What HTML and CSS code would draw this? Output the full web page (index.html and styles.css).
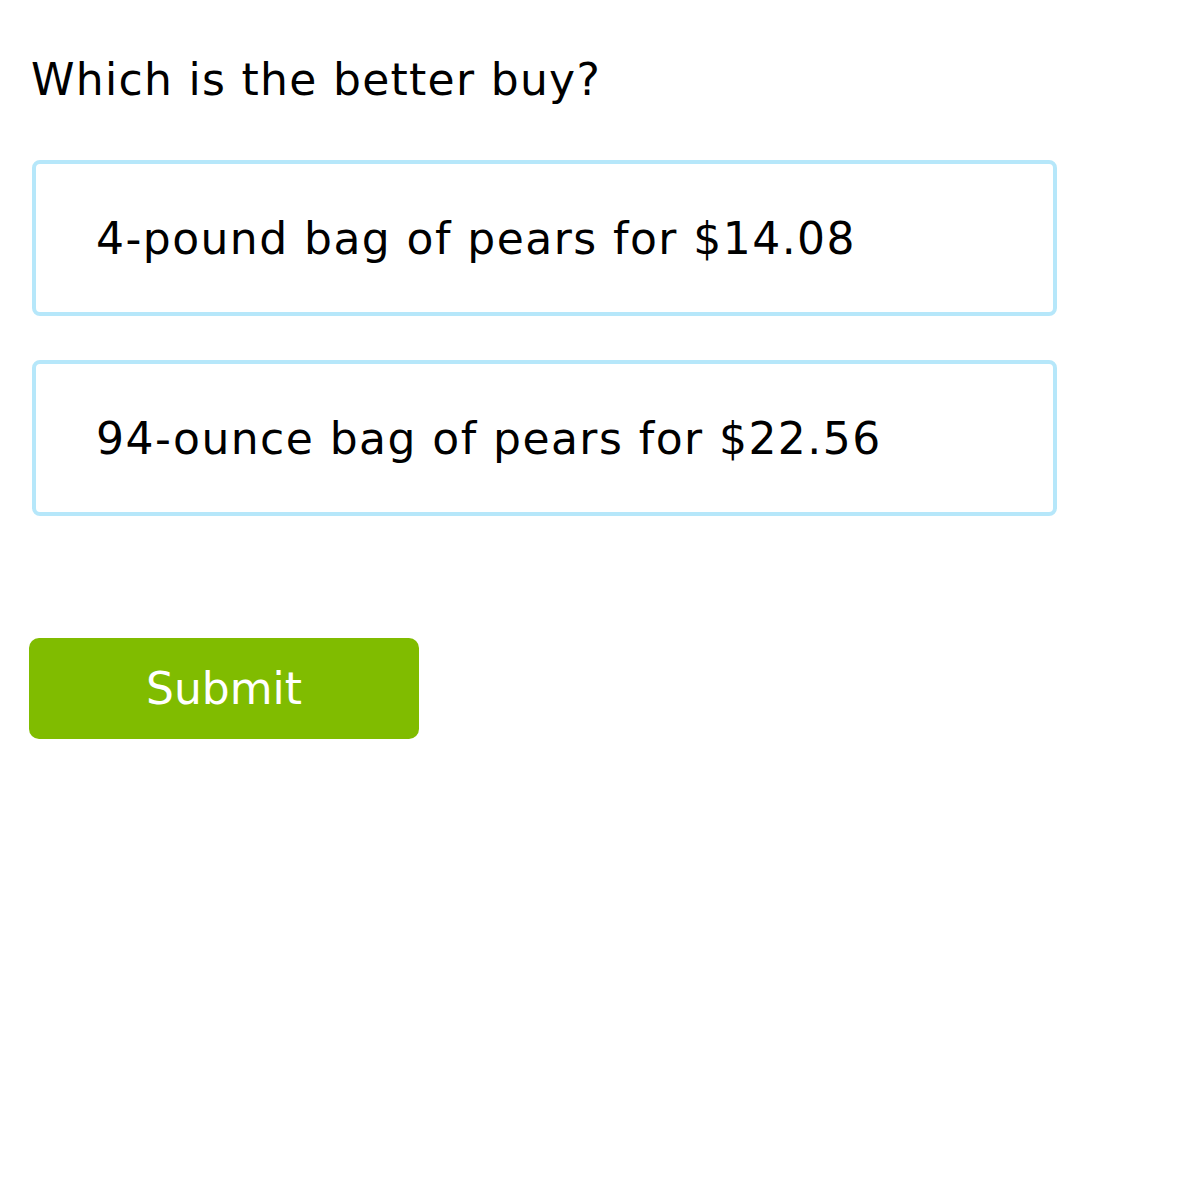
FILE: index.html
```html
<!DOCTYPE html>
<html lang="en">
<head>
  <meta charset="UTF-8" />
  <meta name="viewport" content="width=device-width, initial-scale=1.0"/>
  <title>Better buy</title>
  <link rel="stylesheet" href="styles.css">
</head>
<body>
  <div class="question">
    <h1>Which is the better buy?</h1>

    <!-- Choices -->
    <div class="choices">
      <div class="choice">4-pound bag of pears for $14.08</div>
      <div class="choice">94-ounce bag of pears for $22.56</div>
    </div>

    <button class="submit-btn">Submit</button>
  </div>
</body>
</html>
```

FILE: styles.css
```css
body {
  margin: 0;
  font-family: 'DejaVu Sans', Verdana, sans-serif;
  background: #fff;
  color: #000;
}

.question {
  padding: 48px 0 0 29px;
}

.question h1 {
  margin: 0 0 0 2px;
  font-size: 44px;
  font-weight: normal;
  line-height: 64px;
  letter-spacing: 1.3px;
}

.choices {
  display: flex;
  flex-direction: column;
  gap: 44px;
  margin-top: 48px;
  margin-left: 3px;
}

.choice {
  width: 1025px;
  height: 156px;
  box-sizing: border-box;
  border: 4px solid #b6e7fa;
  border-radius: 8px;
  padding-left: 60px;
  display: flex;
  align-items: center;
  font-size: 44px;
  letter-spacing: 1.45px;
}

.submit-btn {
  margin-top: 122px;
  width: 390px;
  height: 101px;
  background: #80bc00;
  border: none;
  border-radius: 10px;
  color: #fff;
  font-family: inherit;
  font-size: 44px;
  cursor: pointer;
}
```
